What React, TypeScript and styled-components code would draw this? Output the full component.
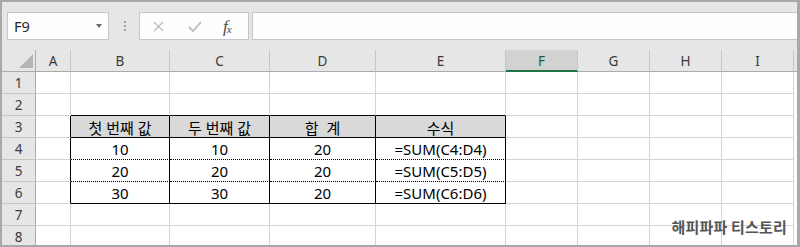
import React from "react";
import styled, { createGlobalStyle } from "styled-components";

const Global = createGlobalStyle`
  html, body { margin: 0; padding: 0; background: #ffffff; }
  body { font-family: "Noto Sans", "Noto Sans CJK KR", sans-serif; }
  * { box-sizing: border-box; }
`;

const Frame = styled.div`
  position: relative;
  width: 800px;
  height: 247px;
  border: 2px solid #a8a8a8;
  border-right-width: 3px;
  background: #e6e6e6;
  overflow: hidden;
  display: flex;
  flex-direction: column;
`;

const FormulaBar = styled.div`
  height: 48px;
  flex: none;
  display: flex;
  align-items: flex-start;
  padding: 10px 0 0 5px;
  background: #e6e6e6;
`;

const Box = styled.div`
  height: 28px;
  background: #fefefe;
  border: 1px solid #c6c6c6;
  display: flex;
  align-items: center;
`;

const NameBox = styled(Box)`
  width: 102px;
  padding-left: 6px;
  font-size: 14.5px;
  color: #262626;
`;

const Caret = styled.span`
  margin-left: auto;
  margin-right: 6px;
  width: 0;
  height: 0;
  border-left: 3.5px solid transparent;
  border-right: 3.5px solid transparent;
  border-top: 4px solid #6a6a6a;
`;

const Dots = styled.div`
  margin: 9px 13px 0 15px;
  width: 2px;
  display: flex;
  flex-direction: column;
  gap: 2px;
`;

const Dot = styled.span`
  width: 2px;
  height: 2px;
  background: #a3a3a3;
`;

const ButtonsBox = styled(Box)`
  width: 110px;
  padding-left: 13px;
`;

const IconSlot = styled.span<{ $w: number }>`
  width: ${(p) => p.$w}px;
  display: flex;
  align-items: center;
  justify-content: flex-start;
`;

const Fx = styled.span`
  font-family: "Liberation Serif", "DejaVu Serif", serif;
  font-style: italic;
  font-size: 17px;
  line-height: 1;
  color: #4a4a4a;
  letter-spacing: -1px;
  & sub {
    font-size: 11px;
    vertical-align: -1px;
  }
`;

const FormulaInput = styled(Box)`
  flex: 1;
  margin-left: 3px;
  border-right: none;
`;

const colWidths = [34, 35, 99, 100, 106, 130, 72, 72, 72, 72];
const colNames = ["A", "B", "C", "D", "E", "F", "G", "H", "I"];

const Grid = styled.div`
  flex: 1;
  display: grid;
  grid-template-columns: ${colWidths.map((w) => w + "px").join(" ")} 1fr;
  grid-auto-rows: 22px;
  background: #ffffff;
  overflow: hidden;
`;

const Corner = styled.div`
  background: #e6e6e6;
  border-right: 1px solid #ababab;
  border-bottom: 1px solid #ababab;
  display: flex;
  align-items: flex-end;
  justify-content: flex-end;
  padding: 0 2px 3px 0;
`;

const CornerTriangle = styled.span`
  width: 0;
  height: 0;
  border-left: 14px solid transparent;
  border-bottom: 14px solid #b5b5b5;
`;

const ColHeader = styled.div<{ $selected?: boolean }>`
  background: ${(p) => (p.$selected ? "#d2d2d2" : "#e6e6e6")};
  border-right: 1px solid #c6c6c6;
  border-bottom: ${(p) => (p.$selected ? "2px solid #217346" : "1px solid #ababab")};
  display: flex;
  align-items: center;
  justify-content: center;
  font-size: 13.5px;
  color: ${(p) => (p.$selected ? "#1d5e3a" : "#3a3a3a")};
  padding-top: ${(p) => (p.$selected ? "1px" : "0")};
`;

const HeaderFiller = styled.div`
  background: #e6e6e6;
  border-bottom: 1px solid #ababab;
`;

const RowHeader = styled.div`
  background: #e6e6e6;
  border-right: 1px solid #ababab;
  border-bottom: 1px solid #c6c6c6;
  display: flex;
  align-items: center;
  justify-content: center;
  font-size: 13.5px;
  color: #3a3a3a;
`;

type Edge = "grid" | "black" | "dotted";

const edge = (e: Edge) =>
  e === "black" ? "1px solid #000000" : e === "dotted" ? "1px dotted #000000" : "1px solid #d4d4d4";

const Cell = styled.div<{ $right: Edge; $bottom: Edge; $head?: boolean }>`
  background: ${(p) => (p.$head ? "#d9d9d9" : "#ffffff")};
  border-right: ${(p) => edge(p.$right)};
  border-bottom: ${(p) => edge(p.$bottom)};
  display: flex;
  align-items: center;
  justify-content: center;
  padding-top: 1px;
  font-size: 15px;
  color: #000000;
  white-space: pre;
  overflow: hidden;
`;

const Filler = styled.div`
  background: #ffffff;
`;

const Watermark = styled.div`
  position: absolute;
  right: 10px;
  bottom: 8px;
  font-family: "Noto Sans CJK KR", sans-serif;
  font-weight: 700;
  font-size: 15px;
  color: #555555;
  letter-spacing: 0.2px;
`;

const table: Record<number, string[]> = {
  3: ["첫 번째 값", "두 번째 값", "합  계", "수식"],
  4: ["10", "10", "20", "=SUM(C4:D4)"],
  5: ["20", "20", "20", "=SUM(C5:D5)"],
  6: ["30", "30", "20", "=SUM(C6:D6)"],
};

function rightEdge(r: number, c: number): Edge {
  return r >= 3 && r <= 6 && c <= 4 ? "black" : "grid";
}

function bottomEdge(r: number, c: number): Edge {
  if (c < 1 || c > 4) return "grid";
  if (r === 2 || r === 3 || r === 6) return "black";
  if (r === 4 || r === 5) return "dotted";
  return "grid";
}

const CloseIcon = () => (
  <svg width="11" height="11" viewBox="0 0 11 11">
    <path d="M1 1 L10 10 M10 1 L1 10" stroke="#bcbcbc" strokeWidth="1.3" fill="none" />
  </svg>
);

const CheckIcon = () => (
  <svg width="14" height="11" viewBox="0 0 14 11">
    <path d="M1 6 L5 10 L13 1" stroke="#bcbcbc" strokeWidth="1.8" fill="none" />
  </svg>
);

export default function App() {
  const rows = [1, 2, 3, 4, 5, 6, 7, 8];
  return (
    <>
      <Global />
      <Frame>
        <FormulaBar>
          <NameBox>
            F9
            <Caret />
          </NameBox>
          <Dots>
            <Dot />
            <Dot />
            <Dot />
          </Dots>
          <ButtonsBox>
            <IconSlot $w={35}>
              <CloseIcon />
            </IconSlot>
            <IconSlot $w={35}>
              <CheckIcon />
            </IconSlot>
            <IconSlot $w={25}>
              <Fx>
                f<sub>x</sub>
              </Fx>
            </IconSlot>
          </ButtonsBox>
          <FormulaInput />
        </FormulaBar>
        <Grid>
          <Corner>
            <CornerTriangle />
          </Corner>
          {colNames.map((n) => (
            <ColHeader key={n} $selected={n === "F"}>
              {n}
            </ColHeader>
          ))}
          <HeaderFiller />
          {rows.map((r) => (
            <React.Fragment key={r}>
              <RowHeader>{r}</RowHeader>
              {colNames.map((n, c) => {
                const inTable = r >= 3 && r <= 6 && c >= 1 && c <= 4;
                return (
                  <Cell key={n} $right={rightEdge(r, c)} $bottom={bottomEdge(r, c)} $head={r === 3 && inTable}>
                    {inTable ? table[r][c - 1] : ""}
                  </Cell>
                );
              })}
              <Filler />
            </React.Fragment>
          ))}
        </Grid>
        <Watermark>해피파파 티스토리</Watermark>
      </Frame>
    </>
  );
}
